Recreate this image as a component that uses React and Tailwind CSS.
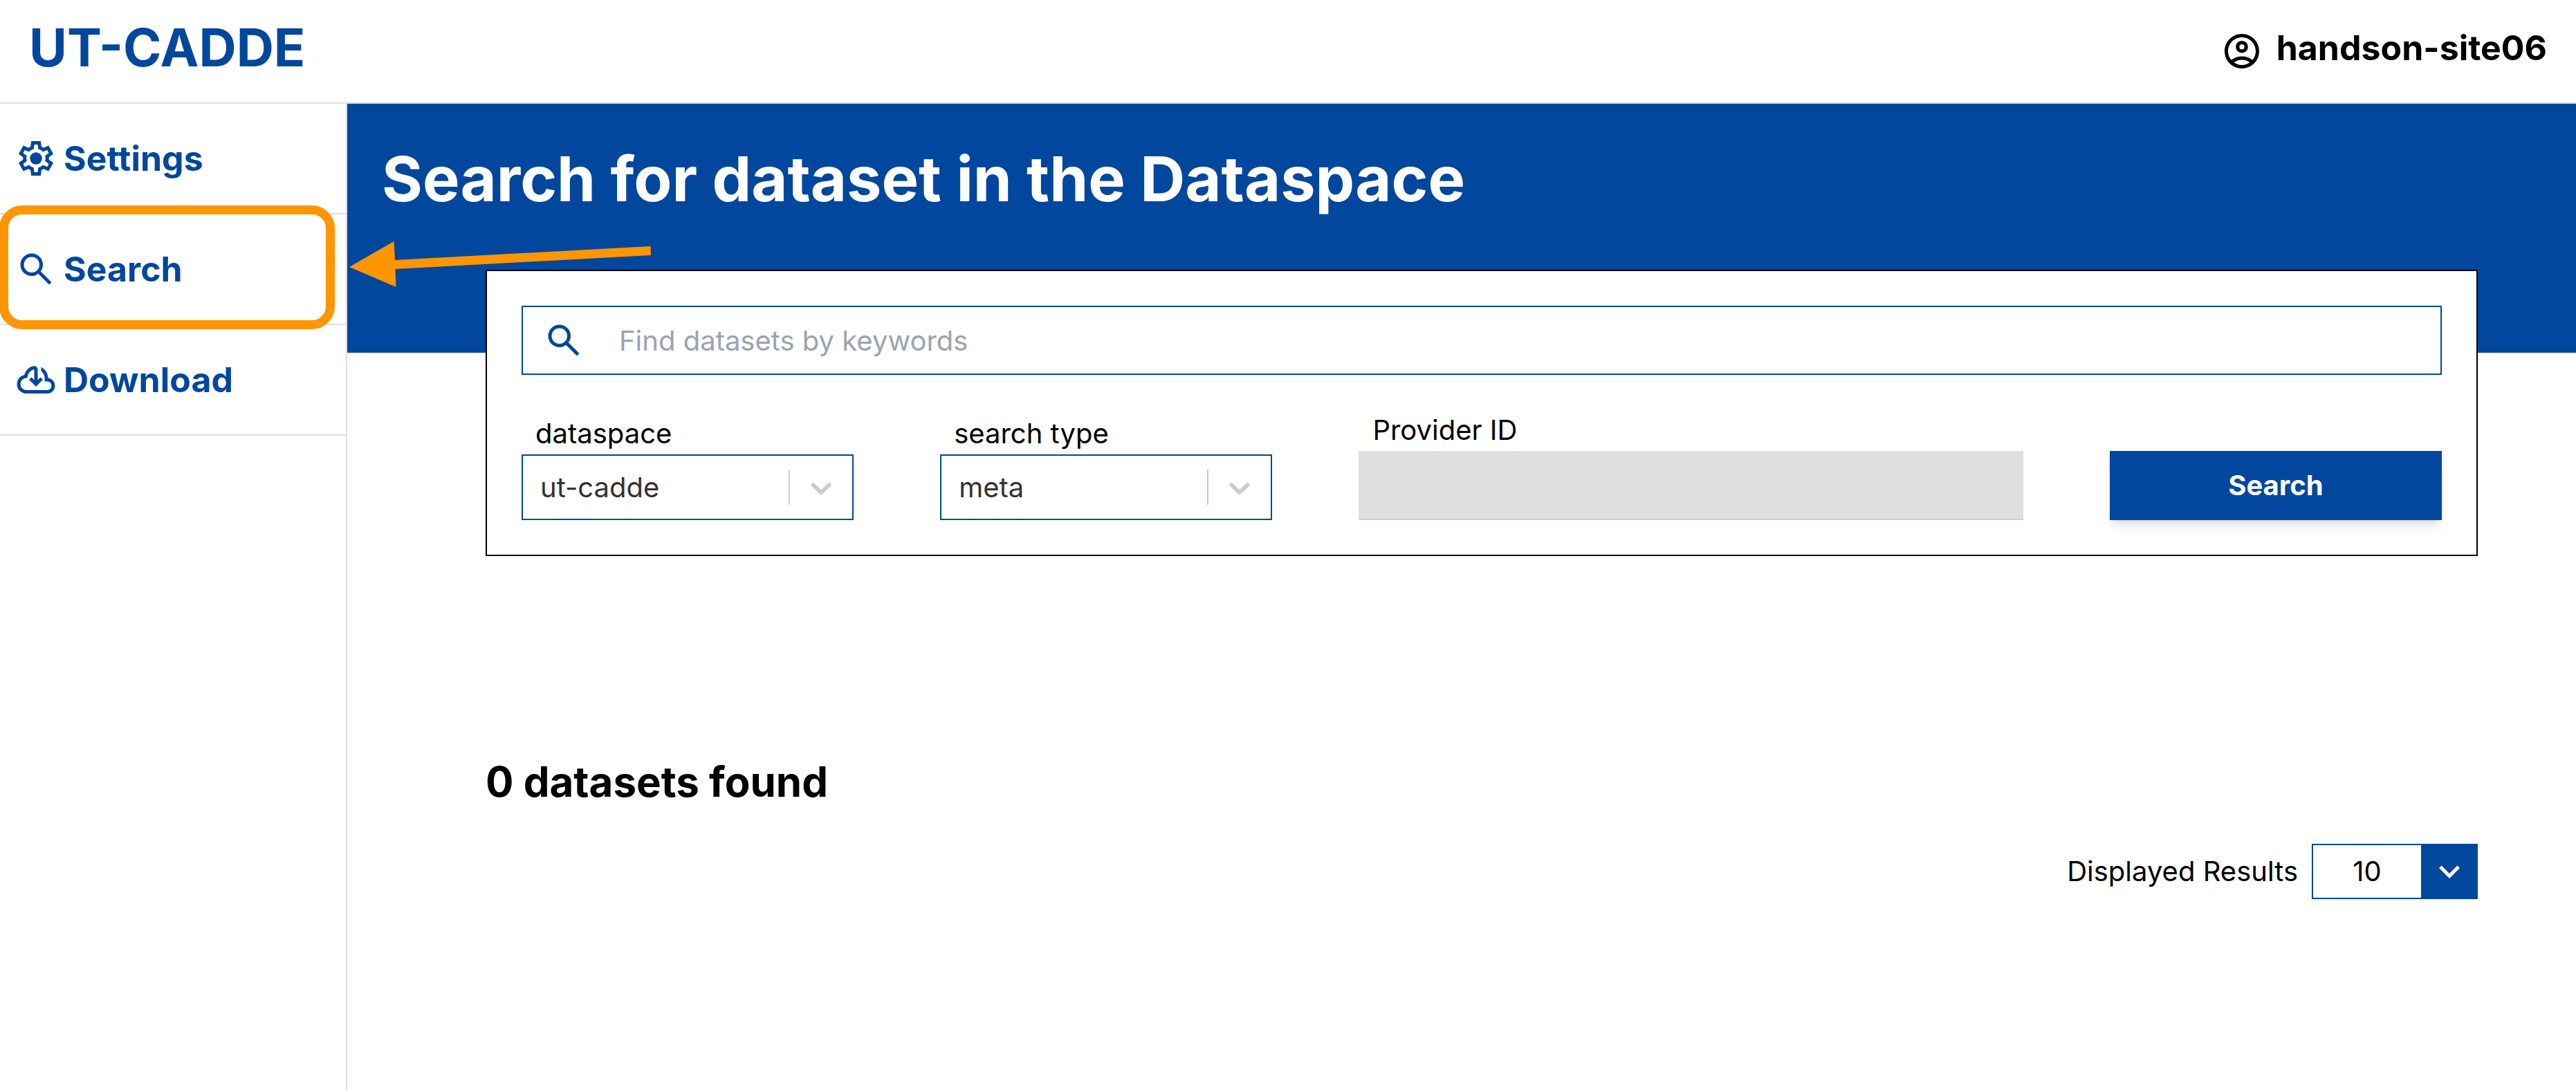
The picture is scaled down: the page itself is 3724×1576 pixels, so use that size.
function Icon({ children, className = "" }) {
  return (
    <svg viewBox="0 0 24 24" fill="currentColor" aria-hidden="true" className={`size-[60px] shrink-0 ${className}`}>
      {children}
    </svg>
  );
}

function SettingsIcon() {
  return (
    <Icon>
      <path
        fillRule="evenodd"
        d="m9.25 22-.4-3.2q-.325-.125-.612-.3-.288-.175-.563-.375L4.7 19.375l-2.75-4.75 2.575-1.95Q4.5 12.5 4.5 12.338v-.675q0-.163.025-.338L1.95 9.375l2.75-4.75 2.975 1.25q.275-.2.575-.375.3-.175.6-.3l.4-3.2h5.5l.4 3.2q.325.125.613.3.287.175.562.375l2.975-1.25 2.75 4.75-2.575 1.95q.025.175.025.338v.674q0 .163-.05.338l2.575 1.95-2.75 4.75-2.95-1.25q-.275.2-.575.375-.3.175-.6.3l-.4 3.2ZM11 20h1.975l.35-2.65q.775-.2 1.438-.588.662-.387 1.212-.937l2.475 1.025.975-1.7-2.15-1.625q.125-.35.175-.738.05-.387.05-.787t-.05-.788q-.05-.387-.175-.737l2.15-1.625-.975-1.7-2.475 1.05q-.55-.575-1.212-.963-.663-.387-1.438-.587L13 4h-1.975l-.35 2.65q-.775.2-1.437.587-.663.388-1.213.938L5.55 7.15l-.975 1.7 2.15 1.6q-.125.375-.175.75-.05.375-.05.8 0 .4.05.775t.175.75l-2.15 1.625.975 1.7 2.475-1.05q.55.575 1.213.962.662.388 1.437.588Z"
      />
      <circle cx="12" cy="12" r="3.5" />
    </Icon>
  );
}

function SearchIcon() {
  return (
    <Icon>
      <path d="m19.6 21-6.3-6.3q-.75.6-1.725.95Q10.6 16 9.5 16q-2.725 0-4.612-1.887Q3 12.225 3 9.5q0-2.725 1.888-4.613Q6.775 3 9.5 3t4.613 1.887Q16 6.775 16 9.5q0 1.1-.35 2.075-.35.975-.95 1.725l6.3 6.3ZM9.5 14q1.875 0 3.188-1.312Q14 11.375 14 9.5q0-1.875-1.312-3.188Q11.375 5 9.5 5 7.625 5 6.312 6.312 5 7.625 5 9.5q0 1.875 1.312 3.188Q7.625 14 9.5 14Z" />
    </Icon>
  );
}

function DownloadIcon() {
  return (
    <Icon>
      <path d="M6.5 20q-2.28 0-3.89-1.57Q1 16.85 1 14.58q0-1.95 1.17-3.48 1.18-1.53 3.08-1.95.43-1.8 2.13-3.43Q9.07 4.1 11 4.1q.83 0 1.41.59.59.58.59 1.41v6.05l1.6-1.55L16 12l-4 4-4-4 1.4-1.4 1.6 1.55V6.1q-1.9.35-2.95 1.84Q7 9.43 7 11h-.5q-1.45 0-2.47 1.03Q3 13.05 3 14.5q0 1.45 1.03 2.47Q5.05 18 6.5 18h12q1.05 0 1.77-.73.73-.72.73-1.77 0-1.05-.73-1.77-.72-.73-1.77-.73H17v-2q0-1.2-.55-2.24-.55-1.04-1.45-1.76V4.68q1.85.87 2.93 2.59Q19 9 19 11q1.73.2 2.86 1.49Q23 13.78 23 15.5q0 1.88-1.31 3.19Q20.38 20 18.5 20Z" />
    </Icon>
  );
}

function AccountIcon() {
  return (
    <Icon className="mt-[10px]">
      <path d="M12 2C6.48 2 2 6.48 2 12s4.48 10 10 10 10-4.48 10-10S17.52 2 12 2zM7.35 18.5C8.66 17.56 10.26 17 12 17s3.34.56 4.65 1.5c-1.31.94-2.91 1.5-4.65 1.5s-3.34-.56-4.65-1.5zm10.79-1.38a9.947 9.947 0 0 0-12.28 0A7.957 7.957 0 0 1 4 12c0-4.42 3.58-8 8-8s8 3.58 8 8c0 1.95-.7 3.73-1.86 5.12z" />
      <path d="M12 6c-1.93 0-3.5 1.57-3.5 3.5S10.07 13 12 13s3.5-1.57 3.5-3.5S13.93 6 12 6zm0 5c-.83 0-1.5-.67-1.5-1.5S11.17 8 12 8s1.5.67 1.5 1.5S12.83 11 12 11z" />
    </Icon>
  );
}

/* Callout drawn over the navigation: a rounded frame and an arrow that points at it. */
function Callout() {
  return (
    <>
      <div className="pointer-events-none absolute -top-[13px] -left-px z-10 h-[179px] w-[485px] rounded-[33px] border-[13px] border-[#ff9500]" />
      <svg
        viewBox="0 0 436 66"
        fill="#ff9500"
        aria-hidden="true"
        className="pointer-events-none absolute top-[39px] left-[505px] z-10 h-[66px] w-[436px]"
      >
        <path d="M0 37 64.500 0 66 27 435.500 7 436 20 66.500 40 67.500 66Z" />
      </svg>
    </>
  );
}

function NavItem({ icon, label, children }) {
  return (
    <li className="relative border-b-2 border-[#dfdfdf]">
      <a href="#" className="flex h-[158px] items-center gap-[10px] pl-[22px] text-[50px] font-bold text-[#00479d]">
        {icon}
        {label}
      </a>
      {children}
    </li>
  );
}

function SelectField({ id, label, value }) {
  return (
    <div>
      <label htmlFor={id} className="block pl-5 leading-[60px]">
        {label}
      </label>
      <div className="relative">
        <select
          id={id}
          defaultValue={value}
          className="block h-[95px] w-full appearance-none border-2 border-[#00479d] bg-white pr-[100px] pl-[25px] text-[#333333]"
        >
          <option value={value}>{value}</option>
        </select>
        <div className="pointer-events-none absolute inset-y-0 right-[22px] flex items-center gap-5 text-[#cccccc]">
          <span className="h-[51px] w-0.5 bg-current" />
          <svg viewBox="0 0 20 20" fill="currentColor" aria-hidden="true" className="size-[50px]">
            <path d="M4.516 7.548c0.436-0.446 1.043-0.481 1.576 0l3.908 3.747 3.908-3.747c0.533-0.481 1.141-0.446 1.574 0 0.436 0.445 0.408 1.197 0 1.615-0.406 0.418-4.695 4.502-4.695 4.502-0.217 0.223-0.502 0.335-0.787 0.335s-0.570-0.112-0.789-0.335c0 0-4.287-4.084-4.695-4.502s-0.436-1.170 0-1.615z" />
          </svg>
        </div>
      </div>
    </div>
  );
}

export default function App() {
  return (
    <div className="flex min-h-screen flex-col bg-white font-['Inter',sans-serif] text-[40px] text-black">
      <header className="flex h-[150px] items-center justify-between border-b-2 border-[#dfdfdf] px-[42px] pb-[10px] font-bold">
        <h1 className="text-[75px] text-[#00479d]">UT-CADDE</h1>
        <div className="flex items-center gap-5 text-[50px]">
          <AccountIcon />
          handson-site06
        </div>
      </header>

      <div className="flex flex-1">
        <nav className="w-[502px] shrink-0 border-r-2 border-[#dfdfdf]">
          <ul>
            <NavItem icon={<SettingsIcon />} label="Settings" />
            <NavItem icon={<SearchIcon />} label="Search">
              <Callout />
            </NavItem>
            <NavItem icon={<DownloadIcon />} label="Download" />
          </ul>
        </nav>

        <main className="min-w-0 flex-1">
          <div className="h-[360px] bg-[#00479d] pt-10 pl-[50px]">
            <h2 className="text-[90px] leading-[138px] font-bold text-white">Search for dataset in the Dataspace</h2>
          </div>

          <div className="pr-[142px] pl-[200px]">
            <form className="-mt-[120px] border-2 border-black bg-white p-[50px]">
              <div className="flex h-[100px] items-center gap-[50px] border-2 border-[#00479d] pl-[29px] text-[#00479d]">
                <SearchIcon />
                <input
                  type="text"
                  aria-label="Keywords"
                  placeholder="Find datasets by keywords"
                  className="h-full min-w-0 flex-1 text-black outline-none placeholder:text-[#9ca3af]"
                />
              </div>

              <div className="mt-[50px] grid grid-cols-[1fr_1fr_2fr_1fr] items-end gap-x-[125px]">
                <SelectField id="dataspace" label="dataspace" value="ut-cadde" />
                <SelectField id="search-type" label="search type" value="meta" />
                <div>
                  <label htmlFor="provider-id" className="block pl-5 leading-[60px]">
                    Provider ID
                  </label>
                  <input
                    id="provider-id"
                    type="text"
                    disabled
                    className="block h-[100px] w-full border-b-2 border-[#c8cedc] bg-[#dfdfdf]"
                  />
                </div>
                <button
                  type="button"
                  className="h-[100px] bg-[#00479d] font-bold text-white shadow-[0_10px_15px_-2px_rgba(0,0,0,0.1),0_5px_10px_-5px_rgba(0,0,0,0.1)]"
                >
                  Search
                </button>
              </div>
            </form>

            <p className="mt-[281px] text-[60px] leading-[90px] font-bold">0 datasets found</p>

            <div className="mt-[45px] flex items-center justify-end gap-5">
              <label htmlFor="page-size">Displayed Results</label>
              <div className="relative">
                <select
                  id="page-size"
                  defaultValue="10"
                  className="block h-20 w-60 appearance-none border-2 border-[#00479d] bg-white pr-20 text-center"
                >
                  <option value="10">10</option>
                </select>
                <div className="pointer-events-none absolute inset-y-0 right-0 flex w-[82px] items-center justify-center bg-[#00479d] text-white">
                  <Icon>
                    <path d="M16.590 8.590 12 13.170 7.410 8.590 6 10l6 6 6-6z" />
                  </Icon>
                </div>
              </div>
            </div>
          </div>
        </main>
      </div>
    </div>
  );
}
